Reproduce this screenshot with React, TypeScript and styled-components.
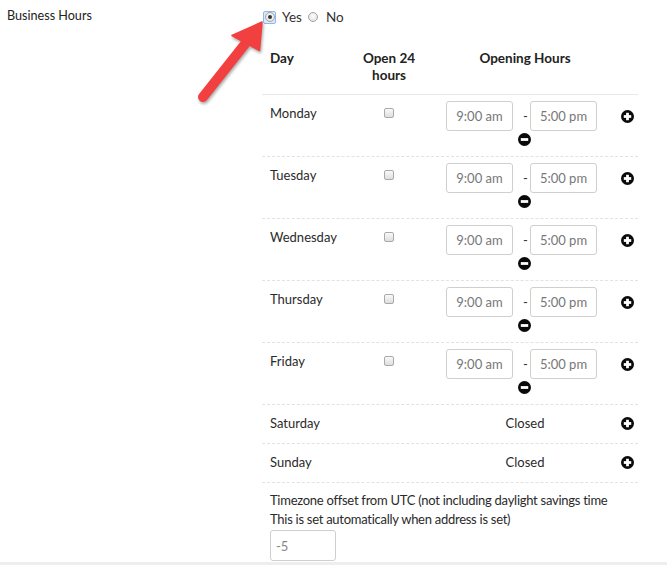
import React from 'react';
import styled, { createGlobalStyle } from 'styled-components';

const GlobalStyle = createGlobalStyle`
  html, body {
    margin: 0;
    padding: 0;
    background: #fff;
  }
  body {
    font-family: Lato, 'Open Sans', sans-serif;
    color: #333;
  }
`;

const COLS = '78px 98px 174px 26px';

const Page = styled.div`
  position: relative;
  width: 667px;
  height: 565px;
  overflow: hidden;
  display: flex;
  flex-direction: column;
`;

const FormRow = styled.div`
  flex: 1;
  display: flex;
`;

const FieldLabel = styled.div`
  width: 255px;
  padding: 7px 0 0 7px;
  font-size: 12.6px;
  line-height: 18px;
  color: #222;
`;

const FieldBody = styled.div`
  width: 376px;
  display: flex;
  flex-direction: column;
`;

const RadioRow = styled.div`
  display: flex;
  align-items: center;
  height: 20px;
  margin-top: 7px;
  font-size: 13.5px;
  line-height: 20px;
  color: #333;
`;

const RadioRing = styled.span<{ $focused?: boolean }>`
  width: 13px;
  height: 13px;
  box-sizing: border-box;
  margin: 0 6px 0 ${p => (p.$focused ? 1 : 0)}px;
  border: 1px solid ${p => (p.$focused ? '#8fb8ea' : 'transparent')};
  border-radius: 2px;
  background: ${p => (p.$focused ? '#dbe9fa' : 'transparent')};
  display: flex;
  align-items: center;
  justify-content: center;
`;

const RadioDot = styled.span<{ $checked?: boolean }>`
  width: 10px;
  height: 10px;
  box-sizing: border-box;
  border-radius: 50%;
  border: 1px solid #a4a4a4;
  background: radial-gradient(circle at 50% 40%, #fdfdfd 0%, #dcdcdc 100%);
  display: flex;
  align-items: center;
  justify-content: center;
  &::after {
    content: '';
    width: 4px;
    height: 4px;
    border-radius: 50%;
    background: ${p => (p.$checked ? '#333' : 'transparent')};
  }
`;

const RadioText = styled.span`
  margin-right: 5px;
`;

const Table = styled.div`
  margin-top: 15px;
  display: flex;
  flex-direction: column;
  font-size: 13px;
`;

const HeaderRow = styled.div`
  display: grid;
  grid-template-columns: ${COLS};
  padding: 8px 0 10px;
  border-bottom: 1px solid #e8e8e8;
  font-size: 13.5px;
  font-weight: 700;
  line-height: 17px;
  color: #222;
`;

const HeaderCell = styled.div<{ $center?: boolean }>`
  padding: 0 8px;
  text-align: ${p => (p.$center ? 'center' : 'left')};
`;

const DayRow = styled.div<{ $closed?: boolean }>`
  display: grid;
  grid-template-columns: ${COLS};
  align-items: start;
  height: ${p => (p.$closed ? 39 : 62)}px;
  box-sizing: border-box;
  border-bottom: 1px dashed #e2e2e2;
`;

const DayName = styled.div`
  padding: 8px 0 0 8px;
  line-height: 20px;
  color: #2a2a2a;
`;

const CheckCell = styled.div`
  display: flex;
  justify-content: center;
  padding-top: 13px;
`;

const CheckBox = styled.span`
  width: 10px;
  height: 10px;
  box-sizing: border-box;
  border: 1px solid #a9a9a9;
  border-radius: 2px;
  background: linear-gradient(#fafafa, #dedede);
`;

const HoursCell = styled.div`
  padding: 6px 0 0 8px;
  display: flex;
  flex-direction: column;
  align-items: flex-start;
`;

const TimeRow = styled.div`
  display: flex;
  align-items: center;
`;

const TimeInput = styled.input`
  width: 67px;
  height: 30px;
  box-sizing: border-box;
  margin: 0;
  padding: 0;
  border: 1px solid #cfcfcf;
  border-radius: 3px;
  font-family: inherit;
  font-size: 13px;
  color: #777;
  text-align: center;
  outline: none;
`;

const Dash = styled.span`
  width: 17px;
  box-sizing: border-box;
  padding-left: 10px;
  line-height: 20px;
  color: #333;
`;

const MinusSlot = styled.div`
  margin: 2px 0 0 72px;
  display: flex;
`;

const ClosedCell = styled.div`
  grid-column: 3;
  padding-top: 8px;
  line-height: 20px;
  text-align: center;
  color: #2a2a2a;
`;

const PlusCell = styled.div<{ $closed?: boolean }>`
  grid-column: 4;
  padding: ${p => (p.$closed ? 12 : 15)}px 0 0 9px;
  display: flex;
`;

const Timezone = styled.div`
  padding: 8px 0 0 8px;
  font-size: 13px;
  letter-spacing: -0.27px;
  line-height: 19px;
  color: #2a2a2a;
  white-space: nowrap;
`;

const TzInput = styled.input`
  display: block;
  width: 66px;
  height: 31px;
  box-sizing: border-box;
  margin: 1px 0 0;
  padding: 0 5px;
  border: 1px solid #cfcfcf;
  border-radius: 3px;
  font-family: inherit;
  font-size: 13px;
  color: #888;
  outline: none;
`;

const Footer = styled.div`
  height: 3px;
  background: #eeeeee;
`;

const ArrowOverlay = styled.svg`
  position: absolute;
  left: 190px;
  top: 15px;
  overflow: visible;
  filter: drop-shadow(1px 2px 1.5px rgba(0, 0, 0, 0.35));
`;

function CircleIcon({ minus }: { minus?: boolean }) {
  return (
    <svg width="13" height="13" viewBox="0 0 14 14">
      <circle cx="7" cy="7" r="7" fill="#0a0a0a" />
      <rect x="3" y="5.5" width="8" height="3" fill="#fff" />
      {!minus && <rect x="5.5" y="3" width="3" height="8" fill="#fff" />}
    </svg>
  );
}

const openDays = ['Monday', 'Tuesday', 'Wednesday', 'Thursday', 'Friday'];
const closedDays = ['Saturday', 'Sunday'];

export default function App() {
  return (
    <Page>
      <GlobalStyle />
      <FormRow>
        <FieldLabel>Business Hours</FieldLabel>
        <FieldBody>
          <RadioRow>
            <RadioRing $focused>
              <RadioDot $checked />
            </RadioRing>
            <RadioText>Yes</RadioText>
            <RadioRing>
              <RadioDot />
            </RadioRing>
            <RadioText>No</RadioText>
          </RadioRow>
          <Table>
            <HeaderRow>
              <HeaderCell>Day</HeaderCell>
              <HeaderCell $center>
                Open 24
                <br />
                hours
              </HeaderCell>
              <HeaderCell $center>Opening Hours</HeaderCell>
              <HeaderCell />
            </HeaderRow>
            {openDays.map(day => (
              <DayRow key={day}>
                <DayName>{day}</DayName>
                <CheckCell>
                  <CheckBox />
                </CheckCell>
                <HoursCell>
                  <TimeRow>
                    <TimeInput defaultValue="9:00 am" readOnly />
                    <Dash>-</Dash>
                    <TimeInput defaultValue="5:00 pm" readOnly />
                  </TimeRow>
                  <MinusSlot>
                    <CircleIcon minus />
                  </MinusSlot>
                </HoursCell>
                <PlusCell>
                  <CircleIcon />
                </PlusCell>
              </DayRow>
            ))}
            {closedDays.map(day => (
              <DayRow key={day} $closed>
                <DayName>{day}</DayName>
                <ClosedCell>Closed</ClosedCell>
                <PlusCell $closed>
                  <CircleIcon />
                </PlusCell>
              </DayRow>
            ))}
            <Timezone>
              Timezone offset from UTC (not including daylight savings time
              <br />
              This is set automatically when address is set)
              <TzInput defaultValue="-5" readOnly />
            </Timezone>
          </Table>
        </FieldBody>
      </FormRow>
      <Footer />
      <ArrowOverlay width="80" height="95" viewBox="0 0 80 95">
        <line x1="13" y1="82" x2="55" y2="29" stroke="#f23f3f" strokeWidth="10" strokeLinecap="round" />
        <polygon points="72,7 42,20.5 69.5,35.5" fill="#f23f3f" stroke="#f23f3f" strokeWidth="1.5" strokeLinejoin="round" />
      </ArrowOverlay>
    </Page>
  );
}
